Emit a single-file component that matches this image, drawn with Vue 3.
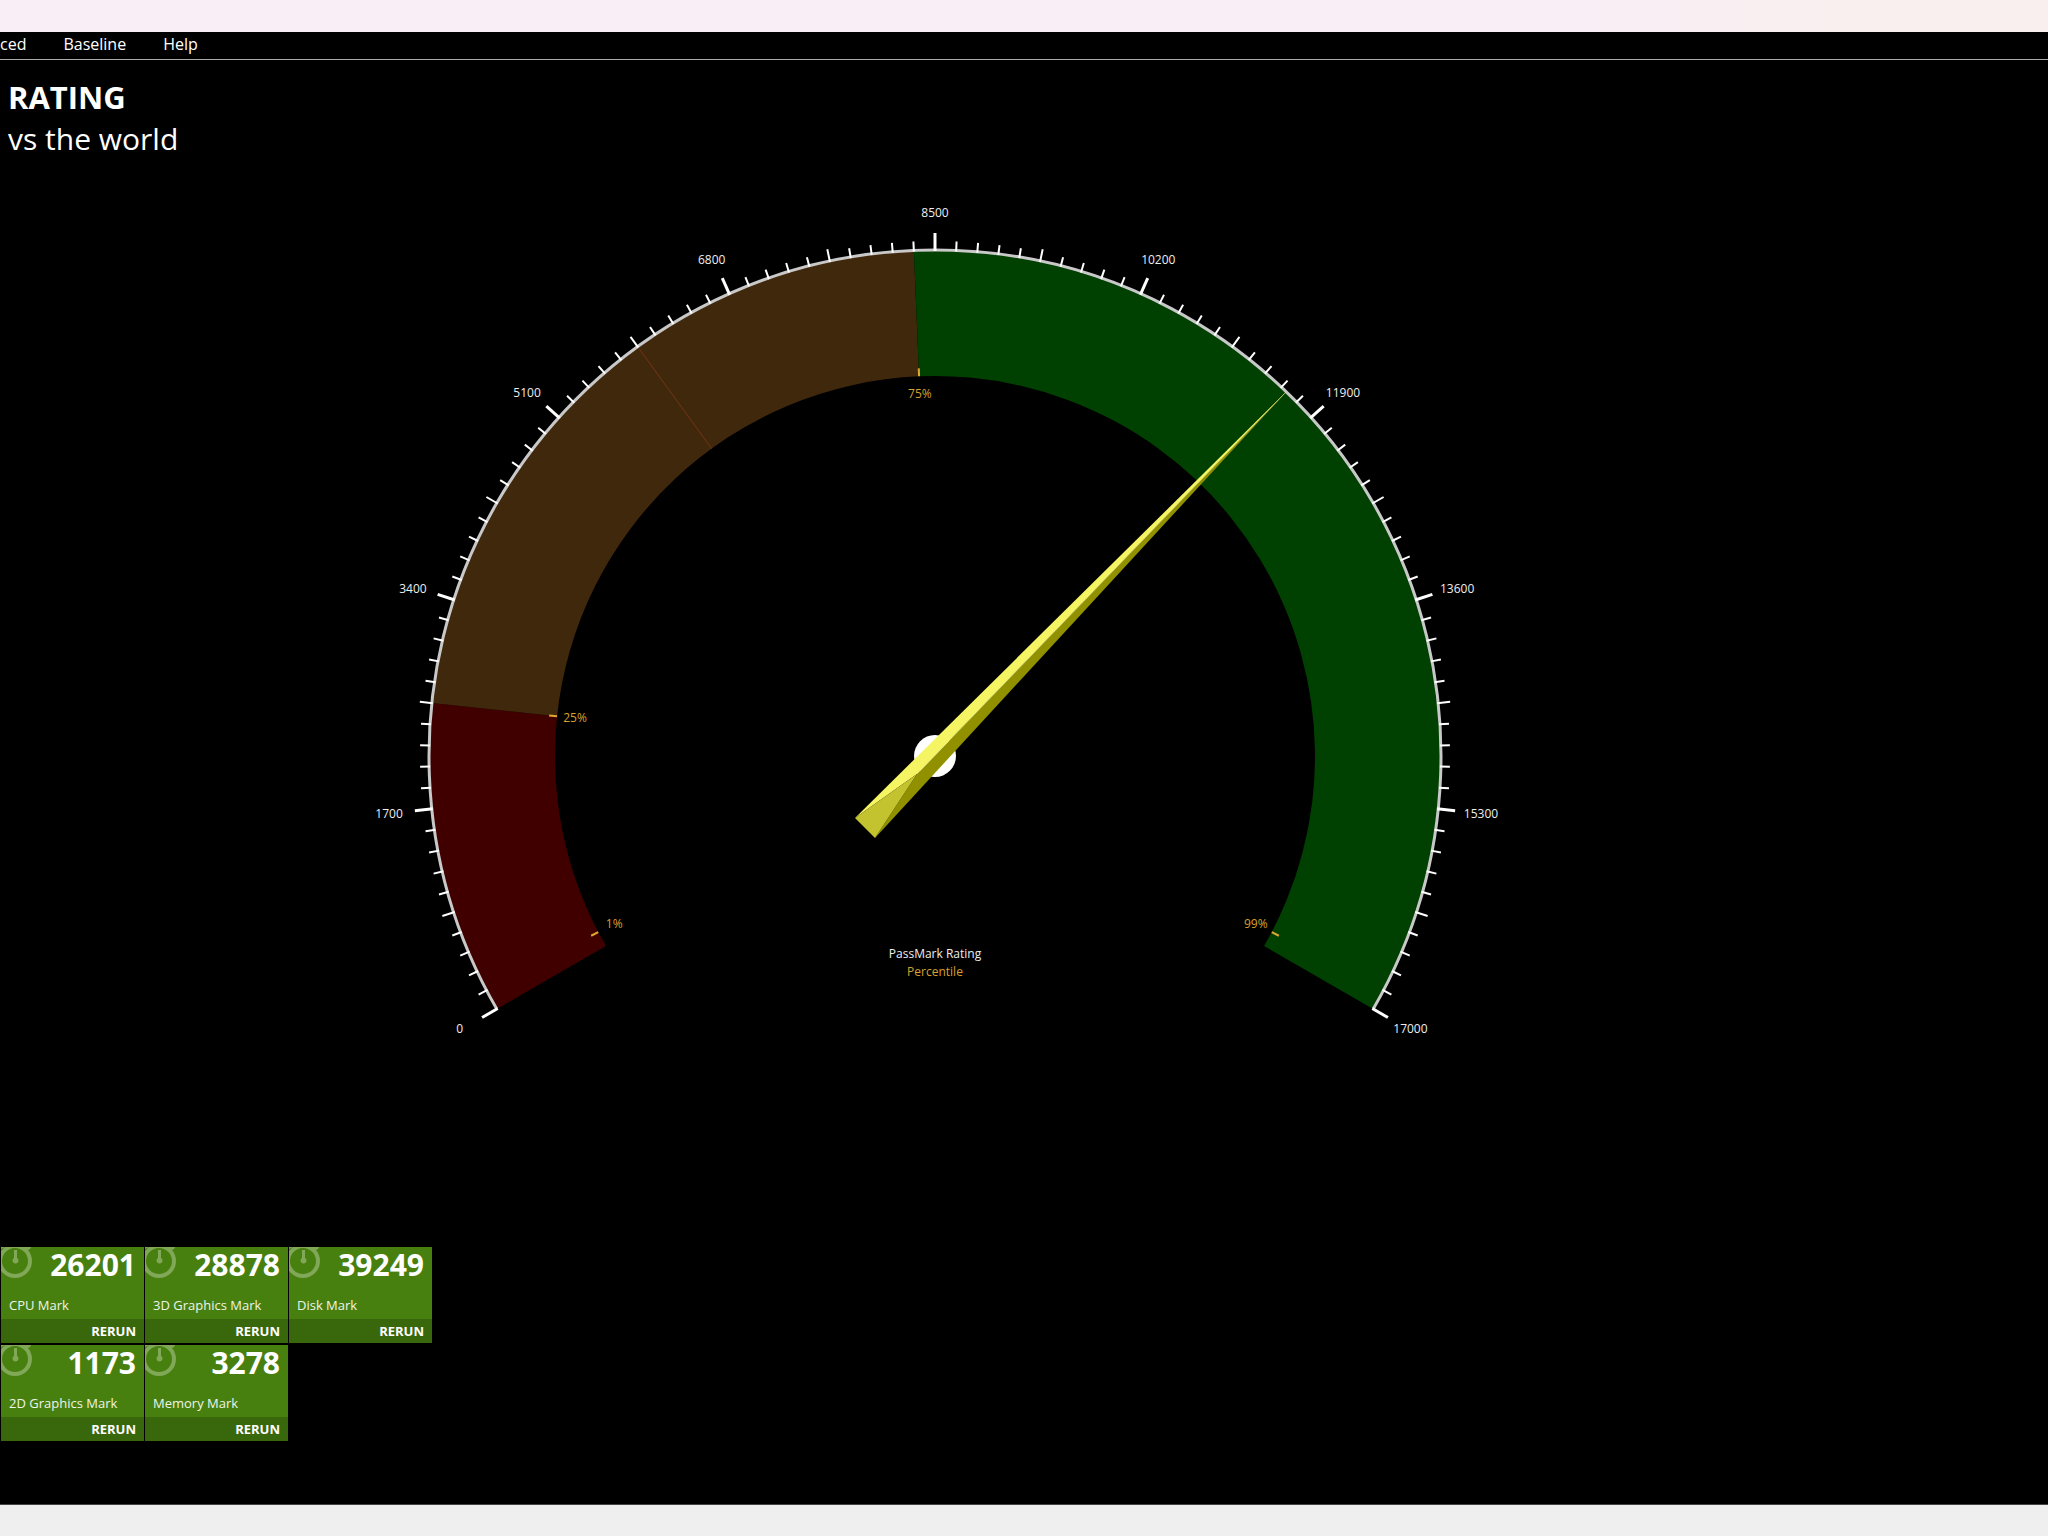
<script setup>

import { ref } from 'vue'

const menu = ref(["ced", "Baseline", "Help"])

const tiles = ref([
    { name: "CPU Mark", score: 26201 },
    { name: "3D Graphics Mark", score: 28878 },
    { name: "Disk Mark", score: 39249 },
    { name: "2D Graphics Mark", score: 1173 },
    { name: "Memory Mark", score: 3278 }
])

// the dial goes from 0 to 240 degrees, starting at the lower left
const outer = 506
const inner = 380

const bands = [
    { from: 0, to: 36, color: "#400000" },
    { from: 36, to: 117.6, color: "#40280c" },
    { from: 117.6, to: 240, color: "#004000" }
]

const percentiles = [
    { text: "1%", angle: 2.4 },
    { text: "25%", angle: 36 },
    { text: "75%", angle: 117.6 },
    { text: "99%", angle: 237.6 }
]

function point(angle, rx, ry = rx) {
    const rad = (angle + 150) * Math.PI / 180
    return { x: Math.round(rx * Math.cos(rad) * 100) / 100, y: Math.round(ry * Math.sin(rad) * 100) / 100 }
}

function bandPath(band) {
    const a = point(band.from, outer)
    const b = point(band.to, outer)
    const c = point(band.to, inner)
    const d = point(band.from, inner)
    return `M${a.x} ${a.y}A${outer} ${outer} 0 0 1 ${b.x} ${b.y}L${c.x} ${c.y}A${inner} ${inner} 0 0 0 ${d.x} ${d.y}Z`
}

function rimPath() {
    const a = point(0, outer)
    const b = point(240, outer)
    return `M${a.x} ${a.y}A${outer} ${outer} 0 1 1 ${b.x} ${b.y}`
}

function line(angle, r1, r2) {
    const a = point(angle, r1)
    const b = point(angle, r2)
    return { x1: a.x, y1: a.y, x2: b.x, y2: b.y }
}

function tickEnd(i) {
    if(i % 10 == 0) {
        return 523
    }
    return i % 5 == 0 ? 518 : 515
}

const ticks = []
for(let i = 0; i <= 100; i++) {
    ticks.push({ major: i % 10 == 0, pos: line(i * 2.4, 505, tickEnd(i)) })
}

const labels = []
for(let i = 0; i <= 10; i++) {
    labels.push({ text: i * 1700, pos: point(i * 24, 549, 544) })
}

</script>

<template>
    <div class="app">
        <div class="titlebar"></div>
        <nav class="menu">
            <button v-for="item in menu" :key="item" class="menu__item" type="button">{{item}}</button>
        </nav>
        <main class="content">
            <header class="heading">
                <h1>RATING</h1>
                <p>vs the world</p>
            </header>

            <svg class="gauge" viewBox="-935 -576 2048 920">
                <path v-for="band in bands" :key="band.from" :d="bandPath(band)" :fill="band.color" />
                <line v-bind="line(84, inner, outer)" class="gauge__average" />
                <path :d="rimPath()" class="gauge__rim" />
                <line v-for="(tick,index) in ticks" :key="index" v-bind="tick.pos" class="gauge__tick" :class="{ 'gauge__tick--major': tick.major }" />
                <text v-for="label in labels" :key="label.text" :x="label.pos.x" :y="label.pos.y + 5" class="gauge__label">{{label.text}}</text>

                <g v-for="item in percentiles" :key="item.text">
                    <line v-bind="line(item.angle, 380, 388)" class="gauge__mark" />
                    <text :x="point(item.angle, 362).x" :y="point(item.angle, 362).y + 4" class="gauge__label gauge__label--percent">{{item.text}}</text>
                </g>

                <circle r="21" fill="#fff" />
                <polygon points="352,-365 -80,62 -18,18" fill="#f5f564" />
                <polygon points="352,-365 -18,18 -60,82" fill="#919100" />
                <polygon points="-80,62 -18,18 -60,82" fill="#c3c32f" />
                <line x1="-18" y1="18" x2="351" y2="-364" class="gauge__ridge" />

                <text x="0" y="202" class="gauge__label">PassMark Rating</text>
                <text x="0" y="220" class="gauge__label gauge__label--percent">Percentile</text>
            </svg>

            <section class="tiles">
                <article v-for="tile in tiles" :key="tile.name" class="tile">
                    <div class="tile__top">
                        <svg class="tile__icon" viewBox="0 0 34 34" aria-hidden="true">
                            <circle cx="14" cy="14" r="15" fill="none" stroke="currentColor" stroke-width="4" />
                            <path d="M13 3h3v8a3 3 0 1 1-3 0zM22 1L24 0H30L29 2L27 3V5L25 6zM0 2V0H4z" fill="currentColor" />
                        </svg>
                        <strong class="tile__score">{{tile.score}}</strong>
                    </div>
                    <div class="tile__name">{{tile.name}}</div>
                    <button class="tile__rerun" type="button">RERUN</button>
                </article>
            </section>
        </main>
        <div class="bottombar"></div>
    </div>
</template>

<style>
body {
    background: #000;
}
</style>

<style scoped>

.app {
    display: flex;
    flex-direction: column;
    min-height: 100vh;
    overflow: hidden;
    background: #000;
    color: #fff;
    font-family: "Open Sans", "Noto Sans", sans-serif;
}

.titlebar {
    height: 32px;
    background: linear-gradient(90deg, #f9eef6 75%, #f9efef 90%);
}

button {
    border: 0;
    padding: 0;
    background: none;
    color: inherit;
    font-family: inherit;
    cursor: pointer;
}

.menu {
    display: flex;
    align-items: flex-start;
    gap: 37px;
    height: 27px;
    border-bottom: 1px solid #aaa;
}

.menu__item {
    font-size: 16px;
    line-height: 24px;
}

.content {
    display: flex;
    flex: 1;
    flex-direction: column;
}

.heading {
    height: 104px;
    padding: 16px 8px 0;
}

.heading h1,
.heading p {
    margin: 0;
    font-size: 30px;
    line-height: 42px;
}

.heading h1 {
    font-size: 31px;
    font-weight: 700;
}

.gauge {
    display: block;
    width: 100%;
}

.gauge__average {
    stroke: #743412;
    stroke-width: 1;
}

.gauge__rim {
    fill: none;
    stroke: #c8c8c8;
    stroke-width: 3;
}

.gauge__tick {
    stroke: #fff;
    stroke-width: 2;
}

.gauge__tick--major {
    stroke-width: 3;
}

.gauge__mark {
    stroke: #e0a830;
    stroke-width: 2;
}

.gauge__ridge {
    stroke: #f5f5a0;
    stroke-width: 1;
    stroke-opacity: 0.6;
}

.gauge__label {
    fill: #eee;
    font-size: 12px;
    text-anchor: middle;
}

.gauge__label--percent {
    fill: #daa02c;
}

.tiles {
    display: grid;
    grid-template-columns: repeat(3, 143px);
    gap: 2px 1px;
    margin-top: auto;
    padding: 0 1px 63px;
}

.tile {
    display: flex;
    flex-direction: column;
    height: 96px;
    background: #488010;
}

.tile__top {
    display: flex;
    justify-content: space-between;
    padding-right: 8px;
}

.tile__icon {
    width: 34px;
    height: 34px;
    color: #80a858;
}

.tile__score {
    font-size: 30px;
    line-height: 36px;
}

.tile__name {
    flex: 1;
    padding: 12px 8px 0;
    font-size: 13px;
    line-height: 20px;
    color: #eef4e8;
}

.tile__rerun {
    padding: 0 8px;
    background: #39670c;
    font-size: 13px;
    font-weight: 700;
    line-height: 24px;
    text-align: right;
}

.bottombar {
    height: 31px;
    border-top: 1px solid #444;
    background: #efefef;
}

</style>
